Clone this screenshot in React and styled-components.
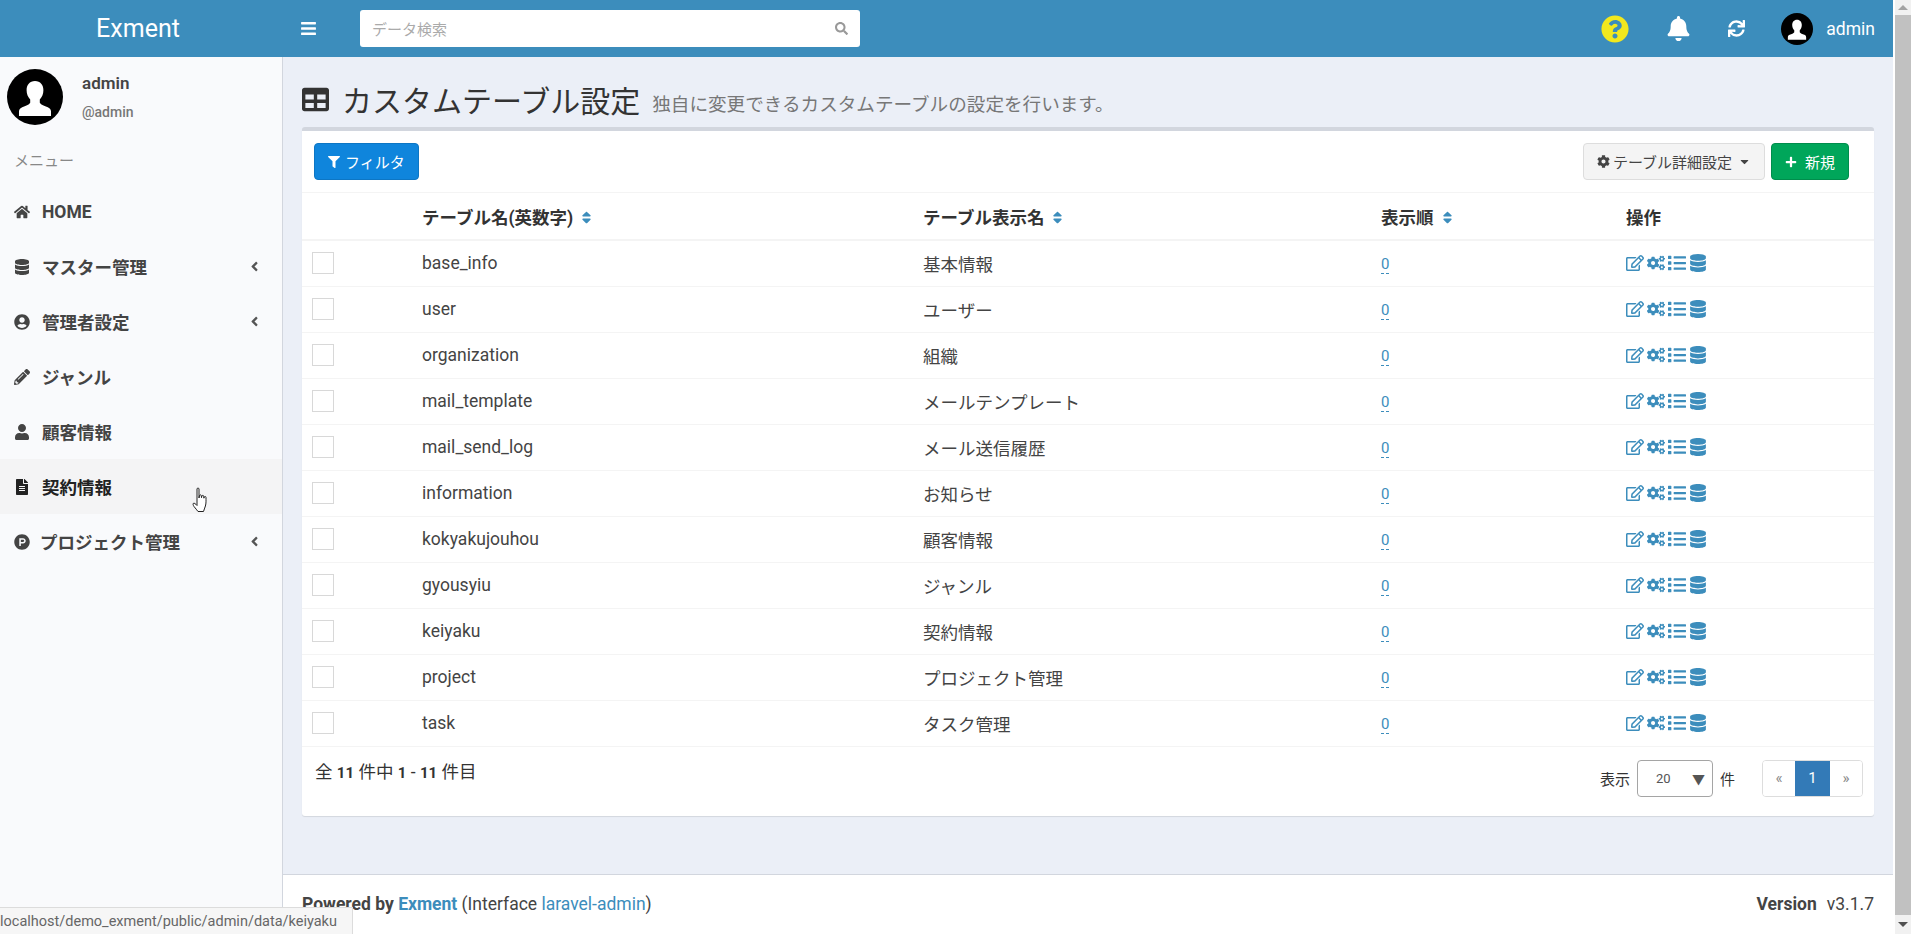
import React from 'react';
import styled, { createGlobalStyle } from 'styled-components';
import {
  FaBars, FaSearch, FaQuestionCircle, FaBell, FaSync, FaTable, FaFilter, FaCog, FaCaretDown, FaPlus,
  FaSort, FaRegEdit, FaCogs, FaList, FaDatabase, FaHome, FaUserCircle, FaPencilAlt, FaUser, FaFileAlt,
  FaProductHunt, FaAngleLeft,
} from 'react-icons/fa';

const FONT = '"Roboto", "Noto Sans CJK JP", sans-serif';

const GlobalStyle = createGlobalStyle`
  html, body { margin: 0; padding: 0; height: 100%; overflow: hidden; }
  body { font-family: ${FONT}; font-size: 17.5px; color: #333; background: #fff; }
  * { box-sizing: border-box; }
`;

const Shell = styled.div`
  position: relative;
  display: flex;
  height: 934px;
  overflow: hidden;
`;

const Page = styled.div`
  flex: 1;
  min-width: 0;
  display: flex;
  flex-direction: column;
`;

/* top bar */
const TopBar = styled.header`
  flex: 0 0 57px;
  display: flex;
  align-items: center;
  background: #3c8dbc;
  color: #fff;
`;

const Logo = styled.div`
  flex: 0 0 276px;
  text-align: center;
  font-size: 25px;
`;

const Burger = styled.span`
  display: flex;
  margin-left: 24px;
  font-size: 17px;
`;

const SearchBox = styled.div`
  width: 500px;
  height: 37px;
  margin-left: 43px;
  padding: 0 12px;
  display: flex;
  align-items: center;
  justify-content: space-between;
  background: #fff;
  border-radius: 3px;
  color: #aaa;
  font-size: 15px;
`;

const NavRight = styled.div`
  margin-left: auto;
  display: flex;
  align-items: center;
  padding-right: 18px;
`;

const NavIcon = styled.span`
  display: flex;
  font-size: ${(p) => p.$size}px;
  margin-right: ${(p) => p.$gap}px;
  color: ${(p) => p.$color || '#fff'};
`;

const NavName = styled.span`
  margin-left: 13px;
  font-size: 17.5px;
`;

const Body = styled.div`
  flex: 1;
  min-height: 0;
  display: flex;
`;

/* sidebar */
const Sidebar = styled.aside`
  flex: 0 0 283px;
  background: #f9fafc;
  border-right: 1px solid #d2d6de;
`;

const UserPanel = styled.div`
  height: 84px;
  padding: 12px 0 0 7px;
  display: flex;
`;

const UserInfo = styled.div`
  margin-left: 19px;
  display: flex;
  flex-direction: column;
`;

const UserName = styled.span`
  font-size: 17px;
  font-weight: 600;
  line-height: 28px;
  color: #444;
`;

const UserHandle = styled.span`
  font-size: 14px;
  line-height: 30px;
  color: #777;
  font-weight: 500;
`;

const MenuLabel = styled.div`
  height: 43px;
  line-height: 41px;
  padding-left: 14px;
  font-size: 15px;
  color: #888;
`;

const MenuItem = styled.div`
  height: 55px;
  display: flex;
  align-items: center;
  padding: 0 20px 0 14px;
  font-size: 17.5px;
  font-weight: 700;
  color: ${(p) => (p.$active ? '#222' : '#444')};
  background: ${(p) => (p.$active ? '#f4f4f5' : 'transparent')};
`;

const MenuIcon = styled.span`
  flex: 0 0 ${(p) => p.$w || 28}px;
  display: flex;
  font-size: 16px;
`;

const MenuAngle = styled.span`
  margin-left: auto;
  display: flex;
  font-size: 15px;
  font-weight: 400;
  color: #555;
`;

/* main */
const Main = styled.main`
  flex: 1;
  min-width: 0;
  display: flex;
  flex-direction: column;
`;

const ContentArea = styled.div`
  flex: 0 0 817px;
  padding: 0 19px 0 19px;
  background: #ebeff7;
`;

const PageHeader = styled.div`
  height: 70px;
  padding-top: 14px;
  display: flex;
  align-items: center;
`;

const TitleIcon = styled.span`
  display: flex;
  font-size: 27px;
  color: #333;
  margin-right: 13px;
`;

const Title = styled.h1`
  margin: 0;
  font-size: 30px;
  font-weight: 400;
  color: #333;
`;

const Subtitle = styled.small`
  margin-left: 12px;
  font-size: 18.6px;
  color: #777;
  padding-top: 6px;
`;

const Box = styled.section`
  height: 689px;
  background: #fff;
  border-top: 4px solid #d2d6de;
  border-radius: 3px;
  box-shadow: 0 1px 1px rgba(0, 0, 0, 0.1);
`;

const Toolbar = styled.div`
  height: 62px;
  padding: 12px 25px 0 12px;
  display: flex;
  justify-content: space-between;
  align-items: flex-start;
  border-bottom: 1px solid #f4f4f4;
`;

const ToolGroup = styled.div`
  display: flex;
  gap: 6px;
`;

const Button = styled.button`
  height: 37px;
  padding: 0 13px;
  display: inline-flex;
  align-items: center;
  gap: ${(p) => p.$gap || 5}px;
  font-family: ${FONT};
  font-size: 15px;
  border-radius: 4px;
  border: 1px solid ${(p) => p.$border};
  background: ${(p) => p.$bg};
  color: ${(p) => p.$fg};
`;

const Table = styled.table`
  width: 100%;
  table-layout: fixed;
  border-collapse: collapse;
`;

const Th = styled.th`
  height: 47px;
  padding: 0 10px;
  text-align: left;
  font-size: 17.5px;
  font-weight: 700;
  color: #333;
  border-bottom: 2px solid #f4f4f4;
`;

const SortIcon = styled(FaSort)`
  margin-left: 6px;
  font-size: 15px;
  color: #3c8dbc;
  vertical-align: -1px;
`;

const Td = styled.td`
  height: 46px;
  padding: 0 10px;
  font-size: 17.5px;
  color: #444;
  border-bottom: 1px solid #f4f4f4;
`;

const CheckBox = styled.span`
  display: block;
  width: 22px;
  height: 22px;
  border: 1px solid #d8d8d8;
  background: #fff;
`;

const OrderLink = styled.span`
  font-size: 15px;
  color: #3c8dbc;
  border-bottom: 1px dashed #3c8dbc;
`;

const Actions = styled.div`
  display: flex;
  align-items: center;
  gap: 3px;
  color: #3c8dbc;
  font-size: 18px;
`;

const BoxFooter = styled.div`
  display: flex;
  justify-content: space-between;
  padding: 13px 11px 0 13px;
`;

const Count = styled.div`
  font-size: 17.5px;
  line-height: 25px;
  color: #333;
  b { font-size: 15px; font-weight: 700; }
`;

const PagerSide = styled.div`
  display: flex;
  align-items: center;
  font-size: 15px;
  color: #333;
`;

const SelectBox = styled.div`
  width: 76px;
  height: 37px;
  margin: 0 7px;
  padding: 0 7px 0 18px;
  display: flex;
  align-items: center;
  justify-content: space-between;
  border: 1px solid #a5a5a5;
  border-radius: 4px;
  font-size: 13px;
  color: #555;
`;

const Pager = styled.div`
  display: flex;
  margin-left: 27px;
  height: 37px;
  border: 1px solid #ddd;
  border-radius: 4px;
  overflow: hidden;
`;

const PageCell = styled.span`
  width: ${(p) => (p.$current ? 35 : 32)}px;
  display: flex;
  align-items: center;
  justify-content: center;
  font-size: 15px;
  color: ${(p) => (p.$current ? '#fff' : '#888')};
  background: ${(p) => (p.$current ? '#337ab7' : '#fff')};
`;

const Footer = styled.footer`
  flex: 1;
  padding: 19px 19px 0 19px;
  display: flex;
  justify-content: space-between;
  background: #fff;
  border-top: 1px solid #d2d6de;
  font-size: 17.5px;
  color: #444;
  b { font-weight: 700; }
`;

const FootLink = styled.span`
  color: #3c8dbc;
`;

const Version = styled.span`
  margin-left: 10px;
`;

/* browser chrome drawn in the picture */
const ScrollBar = styled.div`
  flex: 0 0 18px;
  border-left: 2px solid #fff;
  display: flex;
  flex-direction: column;
  background: #f1f1f1;
`;

const ScrollArrow = styled.div`
  flex: 0 0 ${(p) => p.$h}px;
  display: flex;
  align-items: center;
  justify-content: center;
  &::before {
    content: '';
    border-left: 5px solid transparent;
    border-right: 5px solid transparent;
    ${(p) => (p.$down ? 'border-top: 5px solid #505050;' : 'border-bottom: 5px solid #a3a3a3;')}
  }
`;

const ScrollThumb = styled.div`
  flex: 1;
  background: #c1c1c1;
`;

const StatusBar = styled.div`
  position: absolute;
  left: 0;
  bottom: 0;
  width: 353px;
  height: 27px;
  line-height: 27px;
  background: #f6f6f6;
  border-top: 1px solid #dcdcdc;
  border-right: 1px solid #dcdcdc;
  font-size: 14.5px;
  color: #666;
  white-space: nowrap;
  overflow: hidden;
`;

const Pointer = styled.svg`
  position: absolute;
  left: 192px;
  top: 487px;
`;

const Avatar = ({ size }) => (
  <svg width={size} height={size} viewBox="0 0 56 56">
    <circle cx="28" cy="28" r="28" fill="#000" />
    <path
      fill="#fff"
      d="M28 12c-5.4 0-8.4 4-8.4 9.2 0 3.8 1.4 7 3.6 9.2v3.4c-1.2 2.1-4.6 3-8 4.4-1.6.7-3.2 1.9-3.2 4.1V47h32v-4.7c0-2.2-1.6-3.4-3.2-4.1-3.4-1.4-6.8-2.3-8-4.4v-3.4c2.2-2.2 3.6-5.4 3.6-9.2C36.400 16 33.400 12 28 12z"
    />
  </svg>
);

const menu = [
  { label: 'HOME', icon: FaHome },
  { label: 'マスター管理', icon: FaDatabase, sub: true },
  { label: '管理者設定', icon: FaUserCircle, sub: true },
  { label: 'ジャンル', icon: FaPencilAlt },
  { label: '顧客情報', icon: FaUser },
  { label: '契約情報', icon: FaFileAlt, active: true },
  { label: 'プロジェクト管理', icon: FaProductHunt, sub: true, w: 26 },
];

const rows = [
  ['base_info', '基本情報'],
  ['user', 'ユーザー'],
  ['organization', '組織'],
  ['mail_template', 'メールテンプレート'],
  ['mail_send_log', 'メール送信履歴'],
  ['information', 'お知らせ'],
  ['kokyakujouhou', '顧客情報'],
  ['gyousyiu', 'ジャンル'],
  ['keiyaku', '契約情報'],
  ['project', 'プロジェクト管理'],
  ['task', 'タスク管理'],
];

export default function App() {
  return (
    <Shell>
      <GlobalStyle />
      <Page>
        <TopBar>
          <Logo>Exment</Logo>
          <Burger><FaBars /></Burger>
          <SearchBox>
            データ検索
            <FaSearch size={13} color="#999" />
          </SearchBox>
          <NavRight>
            <NavIcon $size={28} $gap={37} $color="#f2e81e"><FaQuestionCircle /></NavIcon>
            <NavIcon $size={25} $gap={37}><FaBell /></NavIcon>
            <NavIcon $size={17} $gap={36}><FaSync /></NavIcon>
            <Avatar size={32} />
            <NavName>admin</NavName>
          </NavRight>
        </TopBar>
        <Body>
          <Sidebar>
            <UserPanel>
              <Avatar size={56} />
              <UserInfo>
                <UserName>admin</UserName>
                <UserHandle>@admin</UserHandle>
              </UserInfo>
            </UserPanel>
            <MenuLabel>メニュー</MenuLabel>
            {menu.map((m) => (
              <MenuItem key={m.label} $active={m.active}>
                <MenuIcon $w={m.w}><m.icon /></MenuIcon>
                {m.label}
                {m.sub && <MenuAngle><FaAngleLeft /></MenuAngle>}
              </MenuItem>
            ))}
          </Sidebar>
          <Main>
            <ContentArea>
              <PageHeader>
                <TitleIcon><FaTable /></TitleIcon>
                <Title>カスタムテーブル設定</Title>
                <Subtitle>独自に変更できるカスタムテーブルの設定を行います。</Subtitle>
              </PageHeader>
              <Box>
                <Toolbar>
                  <Button $bg="#0f85dc" $border="#0d76c4" $fg="#fff"><FaFilter size={12} />フィルタ</Button>
                  <ToolGroup>
                    <Button $bg="#f4f4f4" $border="#ddd" $fg="#444" $gap={3}>
                      <FaCog size={13} />テーブル詳細設定<FaCaretDown size={13} style={{ marginLeft: 3 }} />
                    </Button>
                    <Button $bg="#00a65a" $border="#008d4c" $fg="#fff" $gap={8}><FaPlus size={12} />新規</Button>
                  </ToolGroup>
                </Toolbar>
                <Table>
                  <colgroup>
                    <col width="110" />
                    <col width="501" />
                    <col width="458" />
                    <col width="245" />
                    <col />
                  </colgroup>
                  <thead>
                    <tr>
                      <Th />
                      <Th>テーブル名(英数字)<SortIcon /></Th>
                      <Th>テーブル表示名<SortIcon /></Th>
                      <Th>表示順<SortIcon /></Th>
                      <Th>操作</Th>
                    </tr>
                  </thead>
                  <tbody>
                    {rows.map(([name, label]) => (
                      <tr key={name}>
                        <Td><CheckBox /></Td>
                        <Td>{name}</Td>
                        <Td>{label}</Td>
                        <Td><OrderLink>0</OrderLink></Td>
                        <Td>
                          <Actions>
                            <FaRegEdit />
                            <FaCogs />
                            <FaList />
                            <FaDatabase />
                          </Actions>
                        </Td>
                      </tr>
                    ))}
                  </tbody>
                </Table>
                <BoxFooter>
                  <Count>全 <b>11</b> 件中 <b>1</b> - <b>11</b> 件目</Count>
                  <PagerSide>
                    表示
                    <SelectBox>20<span>▼</span></SelectBox>
                    件
                    <Pager>
                      <PageCell>«</PageCell>
                      <PageCell $current>1</PageCell>
                      <PageCell>»</PageCell>
                    </Pager>
                  </PagerSide>
                </BoxFooter>
              </Box>
            </ContentArea>
            <Footer>
              <span><b>Powered by <FootLink>Exment</FootLink></b> (Interface <FootLink>laravel-admin</FootLink>)</span>
              <span><b>Version</b><Version>v3.1.7</Version></span>
            </Footer>
          </Main>
        </Body>
      </Page>
      <ScrollBar>
        <ScrollArrow $h={15} />
        <ScrollThumb />
        <ScrollArrow $h={19} $down />
      </ScrollBar>
      <StatusBar>localhost/demo_exment/public/admin/data/keiyaku</StatusBar>
      <Pointer width="18" height="25" viewBox="0 0 18 25">
        <path
          fill="#fff"
          stroke="#222"
          strokeWidth="1"
          d="M5 2c0-1.300 2-1.300 2 0v9l.5-2.500c.3-1 1.700-.8 1.800.2l.2 2 .4-1.700c.3-1 1.700-.8 1.800.2l.2 2 .4-1.200c.4-.9 1.700-.6 1.700.4 0 3 .2 6-.6 8.600-.6 2-1.500 4-1.900 5.500H6c-1-1.500-2.500-3-4-5-.8-1.100-1.300-2.600-.7-3.100.8-.7 2.200.3 3.700 2.100z"
        />
      </Pointer>
    </Shell>
  );
}
